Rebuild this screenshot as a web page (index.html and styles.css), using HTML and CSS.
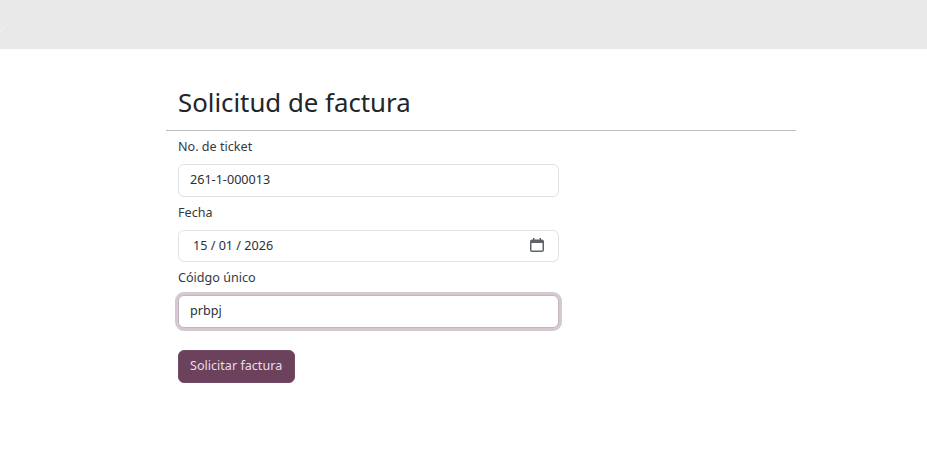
FILE: index.html
```html
<!DOCTYPE html>
<html lang="es">
  <head>
    <meta charset="utf-8">
    <title>Solicitud de factura</title>
    <link rel="stylesheet" href="styles.css">
  </head>
  <body>
    <header class="top-bar"></header>
    <main class="container">
      <h1 class="title">Solicitud de factura</h1>
      <form class="invoice-form">
        <div class="field">
          <label class="field-label" for="ticket">No. de ticket</label>
          <input class="field-input" id="ticket" type="text" value="261-1-000013">
        </div>
        <div class="field">
          <label class="field-label" for="fecha">Fecha</label>
          <div class="date-wrap">
            <input class="field-input date-input" id="fecha" type="text" value="15 / 01 / 2026">
            <svg class="date-icon" viewBox="0 0 14 14" width="14" height="14" aria-hidden="true">
              <path fill="#5f6368" d="M3 0h1.5v1.5h5V0H11v1.5h1A2 2 0 0 1 14 3.5v8.5a2 2 0 0 1-2 2H2a2 2 0 0 1-2-2V3.5a2 2 0 0 1 2-2h1zM1.5 5v7a.5.5 0 0 0 .5.5h10a.5.5 0 0 0 .5-.5V5z"/>
            </svg>
          </div>
        </div>
        <div class="field">
          <label class="field-label" for="codigo">Cóidgo único</label>
          <input class="field-input is-focused" id="codigo" type="text" value="prbpj">
        </div>
        <button class="submit-btn" type="button">Solicitar factura</button>
      </form>
    </main>
  </body>
</html>
```

FILE: styles.css
```css
* {
  box-sizing: border-box;
}
body {
  margin: 0;
  background-color: #fff;
  color: #212529;
  font-family: "Noto Sans", "Open Sans", sans-serif;
  font-size: 12.6px;
}
.top-bar {
  height: 49px;
  background-color: #e9e9e9;
  /* faint diagonal marks at the left edge */
  background-image: repeating-linear-gradient(135deg, #eeeeee 0, #eeeeee 1px, transparent 1px, transparent 12px);
  background-size: 5px 28px;
  background-position: 0 14px;
  background-repeat: no-repeat;
}
.container {
  width: 630px;
  margin-left: 166px;
}
.title {
  margin: 0;
  padding: 36px 12px 11px;
  height: 82px;
  border-bottom: 1px solid #bdbdbd;
  font-size: 25.8px;
  font-weight: 400;
  line-height: 35px;
}
.invoice-form {
  width: 405px;
  padding: 5px 12px 0;
}
.field {
  margin-bottom: 5px;
}
.field-label {
  display: block;
  height: 20px;
  margin-bottom: 8px;
  line-height: 22px;
  color: #343a40;
}
.field-input {
  display: block;
  width: 100%;
  height: 32.5px;
  padding: 0 11px 1px;
  border: 1px solid #dee2e6;
  border-radius: 6px;
  background-color: #fff;
  color: #2b3035;
  font: inherit;
  outline: none;
}
.field-input.is-focused {
  border-color: #c5b3bf;
  box-shadow: 0 0 0 3px #d5c9d1;
}
.date-wrap {
  position: relative;
}
.date-input {
  padding-left: 14px;
}
.date-icon {
  position: absolute;
  top: 8px;
  right: 15px;
}
.submit-btn {
  display: block;
  height: 33px;
  margin-top: 22px;
  padding: 0 12px 1px 11px;
  border: 1px solid #714b67;
  border-radius: 6px;
  background-color: #6b415c;
  color: #e9dfe6;
  font: inherit;
}
```
